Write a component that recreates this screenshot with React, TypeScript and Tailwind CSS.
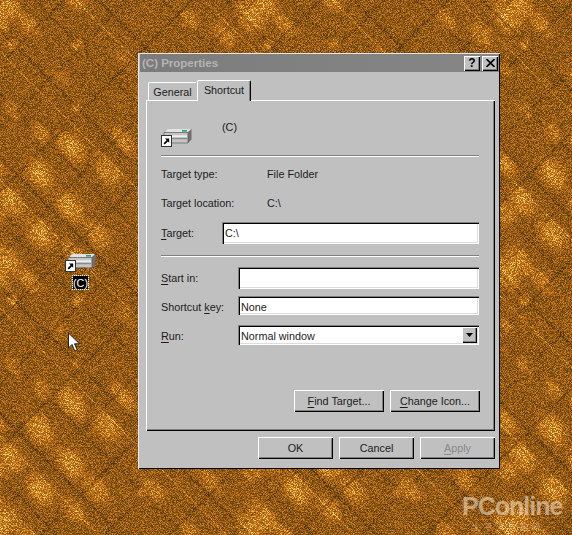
import React from "react";

const raised = "shadow-[inset_1px_1px_0_#fff,inset_-1px_-1px_0_#000,inset_-2px_-2px_0_#808080]";
const sunken = "shadow-[inset_1px_1px_0_#808080,inset_2px_2px_0_#000,inset_-1px_-1px_0_#fff,inset_-2px_-2px_0_#dcdcdc]";

/* wallpaper tile: [cx, cy, rx, ry, strength] of the bright diamond cells */
const cells: number[][] = [
  [72, 147, 24, 15, 1], [40, 174, 24, 15, 1], [10, 201, 23, 14, 1], [70, 207, 24, 15, 1], [40, 234, 24, 15, 1],
  [7, 5, 24, 15, 0.9], [107, 171, 24, 14, 0.85], [123, 141, 22, 11, 0.85], [97, 234, 22, 13, 0.85],
  [13, 110, 15, 8, 0.7], [41, 133, 17, 9, 0.8],
  [250, 18, 24, 14, 1], [225, 35, 20, 11, 0.8], [30, 26, 18, 10, 0.8], [190, 20, 18, 11, 0.7], [154, 234, 20, 12, 0.75],
  [74, 254, 20, 12, 0.75], [160, 175, 20, 11, 0.5], [205, 115, 20, 11, 0.5], [210, 225, 20, 11, 0.7], [125, 60, 17, 10, 0.45],
  [60, 75, 18, 10, 0.4], [170, 70, 18, 10, 0.4], [215, 170, 18, 10, 0.5],
  [250, 165, 18, 11, 0.85], [250, 214, 18, 12, 0.85],
  [13, 45, 8, 7, 1], [78, 45, 8, 7, 1], [77, 108, 8, 6, 0.9], [142, 237, 7, 6, 1], [250, 70, 8, 7, 0.9],
];

function Wallpaper() {
  const bright: React.ReactNode[] = [];
  const shadows: React.ReactNode[] = [];
  for (let k = -5; k <= 4; k++) {
    const x = k * 64;
    shadows.push(<line key={"d" + k} x1={x + 34} y1={0} x2={x + 290} y2={256} stroke="#000" strokeOpacity={k % 2 ? 0.26 : 0.16} strokeWidth="3" />);
    shadows.push(<line key={"e" + k} x1={x + 320} y1={0} x2={x + 64} y2={256} stroke="#000" strokeOpacity={k % 2 ? 0.16 : 0.26} strokeWidth="3" />);
    bright.push(<line key={"f" + k} x1={x + 12} y1={0} x2={x + 268} y2={256} stroke="#fff" strokeOpacity={k % 2 ? 0.34 : 0.14} strokeWidth="1.400" />);
  }
  const blobs: React.ReactNode[] = [];
  cells.forEach(([cx, cy, rx, ry, s], i) => {
    [-256, 0, 256].forEach((dx) =>
      [-256, 0, 256].forEach((dy) => {
        const x = cx + dx;
        const y = cy + dy;
        if (x < -40 || x > 296 || y < -40 || y > 296) return;
        blobs.push(
          <ellipse key={i + "/" + dx + "/" + dy} cx={x} cy={y} rx={rx} ry={ry} fill="url(#blob)" opacity={s} transform={`rotate(52 ${x} ${y})`} />
        );
      })
    );
  });
  return (
    <svg className="absolute inset-0" width="572" height="535" aria-hidden="true">
      <defs>
        <radialGradient id="blob">
          <stop offset="0" stopColor="#fff" stopOpacity="0.5" />
          <stop offset="0.5" stopColor="#fff" stopOpacity="0.36" />
          <stop offset="1" stopColor="#fff" stopOpacity="0" />
        </radialGradient>
        <pattern id="tile" x="0" y="0" width="256" height="256" patternUnits="userSpaceOnUse">
          <rect width="256" height="256" fill="#636363" />
          {blobs}
          {shadows}
          {bright}
        </pattern>
        <filter id="dither" x="0" y="0" width="100%" height="100%" colorInterpolationFilters="sRGB">
          <feTurbulence type="fractalNoise" baseFrequency="1.37" numOctaves="1" seed="7" result="n" />
          <feColorMatrix in="n" type="matrix" values="4 0 0 0 -1.5  4 0 0 0 -1.5  4 0 0 0 -1.5  0 0 0 0 1" result="noise" />
          <feComposite in="SourceGraphic" in2="noise" operator="arithmetic" k1="0" k2="1" k3="0.5" k4="-0.25" result="mix" />
          <feComponentTransfer in="mix">
            <feFuncR type="discrete" tableValues="0.30 0.40 0.50 0.62 0.71 0.80 0.92 0.97" />
            <feFuncG type="discrete" tableValues="0.20 0.26 0.32 0.37 0.41 0.50 0.68 0.84" />
            <feFuncB type="discrete" tableValues="0.05 0.06 0.07 0.08 0.09 0.14 0.24 0.42" />
          </feComponentTransfer>
        </filter>
      </defs>
      <rect width="572" height="535" fill="url(#tile)" filter="url(#dither)" />
    </svg>
  );
}

function ShortcutDrive() {
  return (
    <svg width="31" height="19" viewBox="0 0 31 19" aria-hidden="true">
      {/* top face */}
      <path d="M5 4.500Q5 1 8 1H30L27 4.500Z" fill="#e2e2e2" />
      {/* front face */}
      <path d="M3 4.500H27V14.500H3Z" fill="#c4c4c4" />
      {/* side face */}
      <path d="M27 4L30.500 1V11.500L27 15Z" fill="#6f6f6f" />
      <path d="M3 4.500H27V15H3Z" fill="none" stroke="#5c5c5c" strokeWidth="0.700" />
      <rect x="11" y="7.500" width="15" height="1.200" fill="#fff" />
      <rect x="11" y="10" width="15" height="1.200" fill="#8a8a8a" />
      <rect x="21" y="2" width="5" height="1.600" fill="#18a860" />
      {/* shortcut overlay */}
      <rect x="0.500" y="7.500" width="10" height="11" fill="#fff" stroke="#333" />
      <path d="M3.200 15.800L6.700 12.300" stroke="#000" strokeWidth="1.800" fill="none" />
      <path d="M4 10.500H8.200V14.700Z" fill="#000" />
    </svg>
  );
}

function U({ children }: { children: React.ReactNode }) {
  return <span className="underline underline-offset-2 decoration-1">{children}</span>;
}

function Btn({ w, children, disabled }: { w: string; children: React.ReactNode; disabled?: boolean }) {
  return (
    <div className={`${w} h-[22px] flex items-center justify-center bg-[#c0c0c0] ${raised} ${disabled ? "text-[#8a8a8a]" : ""}`}>
      {children}
    </div>
  );
}

function Field({ label, w, h, mt, children, select, low }: { label: React.ReactNode; w: string; h: string; mt: string; children?: React.ReactNode; select?: boolean; low?: boolean }) {
  const drop = low ? "pt-[2px]" : "";
  return (
    <div className={`flex items-center ${mt}`}>
      <div className={`${w} ${drop}`}>{label}</div>
      <div className={`flex-1 ${h} bg-white flex items-center pl-[3px] ${sunken}`}>
        <span className={`flex-1 ${drop}`}>{children}</span>
        {select && (
          <div className={`w-[15px] h-[16px] mr-[2px] bg-[#c0c0c0] flex items-center justify-center ${raised}`}>
            <svg width="7" height="4" viewBox="0 0 7 4" aria-hidden="true"><path d="M0 0H7L3.500 4Z" fill="#000" /></svg>
          </div>
        )}
      </div>
    </div>
  );
}

export default function App() {
  return (
    <div className="relative w-[572px] h-[535px] overflow-hidden bg-[#a8701a] text-[10.8px] leading-[14px] text-[#1c1c1c] font-['Liberation_Sans',Arial,sans-serif]">
      <Wallpaper />

      {/* desktop icon */}
      <div className="absolute left-[65px] top-[253px] flex flex-col items-center w-[31px]">
        <ShortcutDrive />
        <div className="mt-[4px] w-[15px] h-[13px] bg-black text-white flex items-center justify-center outline-1 outline-dotted outline-white">(C)</div>
      </div>

      {/* cursor */}
      <svg className="absolute left-[67px] top-[332px]" width="14" height="21" viewBox="0 0 14 21" aria-hidden="true">
        <path d="M1.500 1V16L5 12.500L7.800 19L10.300 18L7.500 11.800H12.500Z" fill="#fff" stroke="#222" strokeWidth="1" />
      </svg>

      {/* watermark */}
      <div className="absolute left-[462px] top-[492px] text-[25px] leading-[29px] font-bold tracking-[-1px] text-[#eadcc8]/60">PConline</div>
      <div className="absolute left-[472px] top-[521px] text-[8px] leading-[12px] tracking-[4px] text-[#eadcc8]/50 font-['Noto_Sans_CJK_SC',sans-serif]">太平洋电脑网</div>

      {/* window */}
      <div className="absolute left-[138px] top-[53px] w-[362px] h-[416px] bg-[#c0c0c0] flex flex-col pt-[1px] pl-[2px] pr-[1px] shadow-[inset_1px_1px_0_#e8e8e8,inset_-1px_-1px_0_#000]">
        <div className="h-[18px] shrink-0 flex items-center pl-[2px] pr-[1px] bg-gradient-to-r from-[#7c7c7c] to-[#868686]">
          <span className="flex-1 font-bold text-[#b4b4b4] text-[11.500px]">(C) Properties</span>
          <div className={`w-[16px] h-[15px] bg-[#c0c0c0] flex items-center justify-center font-bold text-[12px] text-black ${raised}`}>?</div>
          <div className={`w-[16px] h-[15px] ml-[2px] bg-[#c0c0c0] flex items-center justify-center ${raised}`}>
            <svg width="9" height="8" viewBox="0 0 9 8" aria-hidden="true"><path d="M0.500 0L8.500 8M8.500 0L0.500 8" stroke="#000" strokeWidth="1.600" /></svg>
          </div>
        </div>

        <div className="flex items-end h-[20px] mt-[8px] ml-[8px] shrink-0">
          <div className="w-[48px] h-[18px] flex items-center justify-center border-t border-l border-white rounded-tl-[2px] bg-[#c0c0c0]">General</div>
          <div className="relative z-10 -mb-[1px] ml-[1px] w-[54px] h-[21px] pb-[2px] flex items-center justify-center bg-[#c0c0c0] border-t border-l border-white border-r border-r-black rounded-t-[2px] shadow-[inset_-1px_0_0_#808080]">Shortcut</div>
        </div>

        <div className={`ml-[6px] w-[349px] h-[331px] shrink-0 flex flex-col pl-[15px] pr-[16px] pt-[20px] pb-[19px] bg-[#c0c0c0] ${raised}`}>
          <div className="flex h-[27px] shrink-0">
            <div className="w-[61px] pt-[8px]"><ShortcutDrive /></div>
            <div>(C)</div>
          </div>
          <div className="mt-[8px] h-[2px] shrink-0 border-t border-t-[#808080] border-b border-b-white" />
          <div className="flex mt-[10px] h-[14px]"><div className="w-[106px]">Target type:</div><div>File Folder</div></div>
          <div className="flex mt-[15px] h-[14px]"><div className="w-[106px]">Target location:</div><div>C:\</div></div>
          <Field mt="mt-[12px]" w="w-[61px]" h="h-[22px]" label={<><U>T</U>arget:</>}>C:\</Field>
          <div className="mt-[11px] h-[2px] shrink-0 border-t border-t-[#808080] border-b border-b-white" />
          <Field mt="mt-[10px]" w="w-[77px]" h="h-[22px]" label={<><U>S</U>tart in:</>} />
          <Field mt="mt-[7px]" w="w-[77px]" h="h-[19px]" low label={<>Shortcut <U>k</U>ey:</>}>None</Field>
          <Field mt="mt-[10px]" w="w-[77px]" h="h-[20px]" low select label={<><U>R</U>un:</>}>Normal window</Field>
          <div className="mt-auto -mr-[1px] flex justify-end gap-[6px]">
            <Btn w="w-[90px]"><span><U>F</U>ind Target...</span></Btn>
            <Btn w="w-[90px]"><span><U>C</U>hange Icon...</span></Btn>
          </div>
        </div>

        <div className="mt-[6px] ml-[118px] flex gap-[6px]">
          <Btn w="w-[75px]">OK</Btn>
          <Btn w="w-[75px]">Cancel</Btn>
          <Btn w="w-[75px]" disabled><span><U>A</U>pply</span></Btn>
        </div>
      </div>
    </div>
  );
}
